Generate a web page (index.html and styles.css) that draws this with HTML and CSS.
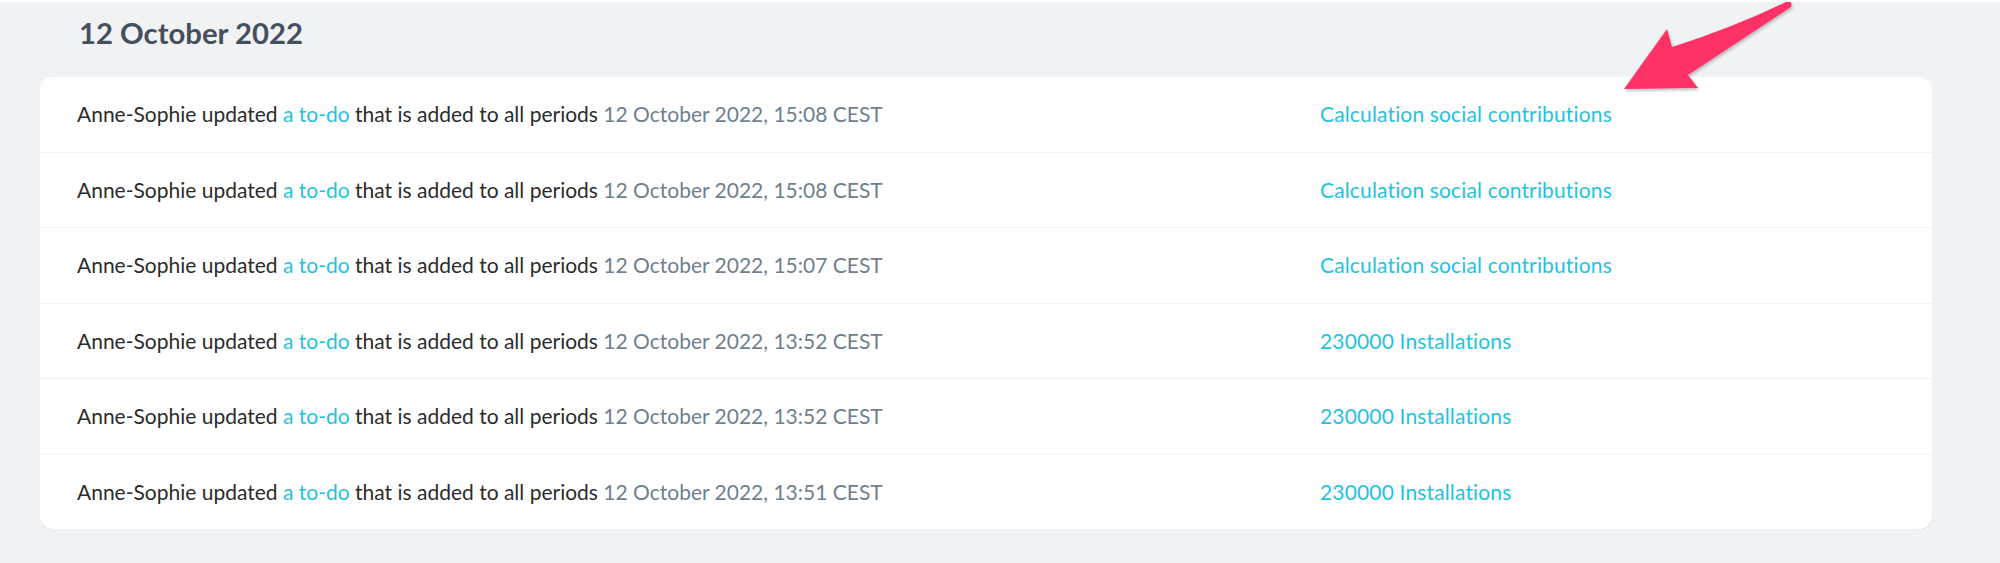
FILE: index.html
```html
<!DOCTYPE html>
<html lang="en">
<head>
    <meta charset="utf-8">
    <title>Activity</title>
    <link rel="stylesheet" href="styles.css">
</head>
<body>
<div class="page">
    <h2 class="day">12 October 2022</h2>
    <div class="card">
        <div class="row">
            <p class="event">Anne-Sophie updated <a href="#">a to-do</a> that is added to all periods <span class="time">12 October 2022, 15:08 CEST</span></p>
            <a class="target" href="#">Calculation social contributions</a>
        </div>
        <div class="row">
            <p class="event">Anne-Sophie updated <a href="#">a to-do</a> that is added to all periods <span class="time">12 October 2022, 15:08 CEST</span></p>
            <a class="target" href="#">Calculation social contributions</a>
        </div>
        <div class="row">
            <p class="event">Anne-Sophie updated <a href="#">a to-do</a> that is added to all periods <span class="time">12 October 2022, 15:07 CEST</span></p>
            <a class="target" href="#">Calculation social contributions</a>
        </div>
        <div class="row">
            <p class="event">Anne-Sophie updated <a href="#">a to-do</a> that is added to all periods <span class="time">12 October 2022, 13:52 CEST</span></p>
            <a class="target" href="#">230000 Installations</a>
        </div>
        <div class="row">
            <p class="event">Anne-Sophie updated <a href="#">a to-do</a> that is added to all periods <span class="time">12 October 2022, 13:52 CEST</span></p>
            <a class="target" href="#">230000 Installations</a>
        </div>
        <div class="row">
            <p class="event">Anne-Sophie updated <a href="#">a to-do</a> that is added to all periods <span class="time">12 October 2022, 13:51 CEST</span></p>
            <a class="target" href="#">230000 Installations</a>
        </div>
    </div>

    <!-- annotation arrow -->
    <svg class="arrow" width="190" height="100" viewBox="0 0 190 100">
        <defs>
            <filter id="shadow" x="-20%" y="-20%" width="140%" height="140%">
                <feDropShadow dx="1" dy="2" stdDeviation="1.5" flood-color="#000" flood-opacity="0.25"/>
            </filter>
        </defs>
        <path d="M14 89 L57 29 L62 47 Q122 28 176 2 Q183 0 181 7 Q128 42 78 75 L88 88 Z" fill="#ff3068" filter="url(#shadow)"/>
    </svg>
</div>
</body>
</html>
```

FILE: styles.css
```css
body {
    margin: 0;
    background-color: #f1f2f4;
    border-top: 2px solid #fff;
    font-family: Lato, "Open Sans", sans-serif;
}

.page {
    position: relative;
    padding: 13px 68px 0 40px;
}

.day {
    margin: 0 0 26px 39px;
    font-size: 29.3px;
    line-height: 36px;
    font-weight: 700;
    color: #454f5d;
}

.card {
    background-color: #fff;
    border-radius: 13px;
    box-shadow: 0 1px 1px rgba(0, 0, 0, 0.08);
}

.row {
    display: grid;
    grid-template-columns: 1243px 1fr;
    align-items: center;
    height: 74.5px;
    padding: 0 38px 0 37px;
    font-size: 21px;
    line-height: 24px;
}

.row + .row {
    border-top: 1px solid #f0f1f3;
}

.event {
    margin: 0;
    color: #2c2c2c;
}

a {
    color: #1fc3e1;
    text-decoration: none;
}

.target {
    letter-spacing: 0.15px;
}

.time {
    color: #6e7f8f;
}

.arrow {
    position: absolute;
    left: 1610px;
    top: -2px;
}
```
